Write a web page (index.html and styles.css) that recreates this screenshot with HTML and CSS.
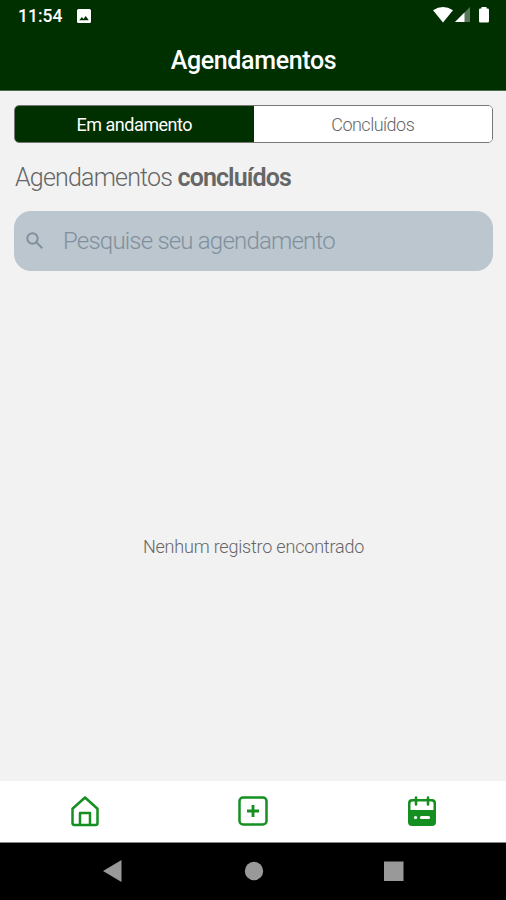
FILE: index.html
```html
<!DOCTYPE html>
<html lang="pt-BR">
<head>
    <meta charset="UTF-8">
    <title>Agendamentos</title>
    <link rel="stylesheet" href="styles.css">
</head>
<body>
    <header>
        <div class="status-bar">
            <span class="clock">11:54</span>
            <svg class="picture" width="14" height="14" viewBox="0 0 14 14">
                <path fill="#fff" fill-rule="evenodd" d="M1.500 0h11Q14 0 14 1.500v11Q14 14 12.500 14h-11Q0 14 0 12.500v-11Q0 0 1.500 0zM2.300 11.200h9.500L8.700 7 6.500 9.900 4.900 8z"/>
            </svg>
            <svg class="signals" width="58" height="18" viewBox="0 0 58 18">
                <path fill="#fff" d="M0 4.300Q10 -2.300 20 4.300L10 16.500z"/>
                <path fill="#58765a" d="M37 1v15H22z"/>
                <path fill="#fff" d="M31.500 6.500V16H22z"/>
                <path fill="#fff" d="M48.500 1h5v1.500h1.200q1.300 0 1.300 1.300v11.400q0 1.300-1.300 1.300h-7.400q-1.300 0-1.300-1.300V3.800q0-1.300 1.300-1.300h1.200z"/>
            </svg>
        </div>
        <h1>Agendamentos</h1>
    </header>

    <main>
        <div class="tabs">
            <button class="tab active"><span>Em andamento</span></button>
            <button class="tab"><span>Concluídos</span></button>
        </div>
        <h2>Agendamentos <b>concluídos</b></h2>
        <div class="search">
            <svg width="18" height="18" viewBox="0 0 18 18" fill="none" stroke="#81909d" stroke-width="2">
                <circle cx="6.500" cy="6.500" r="5.200"/>
                <path d="M10.300 10.300l6 6"/>
            </svg>
            <span>Pesquise seu agendamento</span>
        </div>
        <p class="empty">Nenhum registro encontrado</p>
    </main>

    <nav class="menu">
        <a>
            <svg width="30" height="32" viewBox="0 0 30 32" fill="none" stroke="#159020" stroke-width="2.500" stroke-linejoin="round">
                <path d="M15 2.500L2.500 13.800V28q0 2 2 2h21q2 0 2-2V13.800z"/>
                <path d="M10 30V18h10v12"/>
            </svg>
        </a>
        <a>
            <svg width="30" height="32" viewBox="0 0 30 32" fill="none" stroke="#159020" stroke-width="2.500">
                <rect x="1.500" y="2.500" width="27" height="27" rx="3.500"/>
                <path d="M15 10v12M9 16h12" stroke-width="2.800"/>
            </svg>
        </a>
        <a>
            <svg width="30" height="32" viewBox="0 0 30 32">
                <path fill="#159020" fill-rule="evenodd" d="M5 4h20q4 0 4 4v19q0 4-4 4H5q-4 0-4-4V8q0-4 4-4zM3.500 8.500V15h23V8.500q0-2-2-2h-19q-2 0-2 2z"/>
                <path stroke="#159020" stroke-width="2.600" stroke-linecap="round" d="M9 2.500v7M21 2.500v7"/>
                <path stroke="#fff" stroke-width="3.200" stroke-linecap="round" d="M8.500 22.500h.1M14.500 22.500h7"/>
            </svg>
        </a>
    </nav>

    <div class="system-bar">
        <svg width="20" height="22" viewBox="0 0 20 22"><path fill="#999" d="M0 11L18.500 0v22z"/></svg>
        <svg width="20" height="22" viewBox="0 0 20 22"><circle cx="10" cy="11" r="9.200" fill="#999"/></svg>
        <svg width="20" height="22" viewBox="0 0 20 22"><path fill="#999" d="M0 1.500h19.500V21H0z"/></svg>
    </div>
</body>
</html>
```
FILE: styles.css
```css
body {
    font-family: Roboto, sans-serif;
    display: flex;
    flex-direction: column;
    height: 100vh;
    margin: 0;
    background-color: #f2f2f2;
}

header {
    box-sizing: border-box;
    height: 91px;
    background-color: #003000;
    border-bottom: 1px solid #4c6b4c;
    color: #fff;
}

.status-bar {
    display: flex;
    align-items: center;
    height: 32px;
    padding: 0 15px 0 18px;
}

.clock {
    width: 45px;
    font-size: 17.5px;
    font-weight: 500;
}

.picture {
    margin-left: 14px;
}

.signals {
    margin-left: auto;
    margin-top: -2px;
}

h1 {
    margin: 0 0 0 1px;
    font-size: 25px;
    font-weight: 500;
    line-height: 58px;
    letter-spacing: -0.35px;
    text-align: center;
}

main {
    display: flex;
    flex-direction: column;
    flex: 1;
    padding: 14px 13px 0 14px;
    color: #666;
}

.tabs {
    display: flex;
    box-sizing: border-box;
    height: 38px;
    border: 1px solid #777;
    border-radius: 5px;
    overflow: hidden;
}

.tab {
    flex: 1;
    padding: 0;
    border: none;
    background-color: #fff;
    color: #666;
    font-family: inherit;
    font-size: 18px;
    font-weight: 300;
    letter-spacing: -0.5px;
}

.tab.active {
    background-color: #003000;
    color: #fff;
    font-weight: 400;
}

h2 {
    margin: 16px 0 15px 1px;
    font-size: 25px;
    font-weight: 300;
    line-height: 37px;
    letter-spacing: -0.8px;
    white-space: nowrap;
}

h2 b {
    font-weight: 600;
    letter-spacing: -0.9px;
}

.search {
    display: flex;
    align-items: center;
    height: 60px;
    padding-left: 12px;
    border-radius: 17px;
    background-color: #bbc6cf;
    color: #81909d;
    font-size: 24px;
    font-weight: 300;
    letter-spacing: -0.8px;
}

.search span {
    margin-left: 19px;
}

.empty {
    margin: auto;
    padding-top: 41px;
    font-size: 18px;
    font-weight: 300;
    letter-spacing: -0.2px;
}

.menu {
    display: flex;
    align-items: center;
    box-sizing: border-box;
    height: 61px;
    padding: 0 0 2px 1px;
    background-color: #fff;
}

.menu a {
    display: flex;
    flex: 1;
    justify-content: center;
}

.system-bar {
    box-sizing: border-box;
    display: flex;
    align-items: center;
    justify-content: space-between;
    height: 58px;
    padding: 0 102px 2px 103px;
    background-color: #000;
    border-top: 1px solid #888;
}
```
